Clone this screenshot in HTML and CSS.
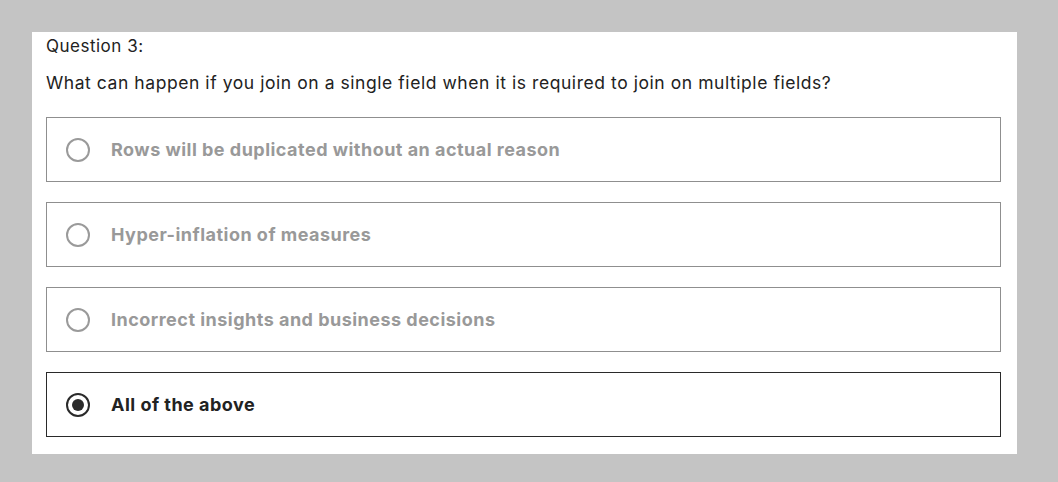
FILE: index.html
```html
<!DOCTYPE html>
<html lang="en">
<head>
<meta charset="utf-8">
<link rel="stylesheet" href="styles.css">
</head>
<body>
<div class="panel">
  <div class="label">Question 3:</div>
  <div class="question">What can happen if you join on a single field when it is required to join on multiple fields?</div>
  <div class="options">
    <div class="option"><span class="radio"></span><span class="text">Rows will be duplicated without an actual reason</span></div>
    <div class="option"><span class="radio"></span><span class="text">Hyper-inflation of measures</span></div>
    <div class="option"><span class="radio"></span><span class="text">Incorrect insights and business decisions</span></div>
    <div class="option selected"><span class="radio"></span><span class="text">All of the above</span></div>
  </div>
</div>
</body>
</html>
```
FILE: styles.css
```css
html, body {
  margin: 0;
  padding: 0;
  background: #c4c4c4;
}
body {
  padding: 32px 0 0 32px;
  font-family: Inter, "Noto Sans", sans-serif;
  color: #222;
}
.panel {
  background: #fff;
  width: 985px;
  height: 422px;
  box-sizing: border-box;
  padding: 0 16px 0 14px;
}
.label {
  font-size: 17px;
  letter-spacing: 0.5px;
  line-height: 26px;
  padding-top: 1px;
}
.question {
  font-size: 17.5px;
  letter-spacing: 0.56px;
  line-height: 24px;
  margin-top: 12px;
}
.options {
  display: flex;
  flex-direction: column;
  gap: 20px;
  margin-top: 22px;
}
.option {
  height: 65px;
  box-sizing: border-box;
  border: 1px solid #8f8f8f;
  display: flex;
  align-items: center;
  padding-left: 19px;
  gap: 21px;
}
.radio {
  width: 24px;
  height: 24px;
  box-sizing: border-box;
  border: 2px solid #9a9a9a;
  border-radius: 50%;
  display: flex;
  align-items: center;
  justify-content: center;
  flex: none;
}
.text {
  font-size: 18px;
  font-weight: 700;
  color: #999;
  letter-spacing: 0.48px;
}
.option.selected {
  border-color: #2a2a2a;
}
.option.selected .radio {
  border: 2.5px solid #2a2a2a;
}
.option.selected .radio::after {
  content: "";
  width: 12px;
  height: 12px;
  border-radius: 50%;
  background: #2a2a2a;
}
.option.selected .text {
  color: #222;
}
```
